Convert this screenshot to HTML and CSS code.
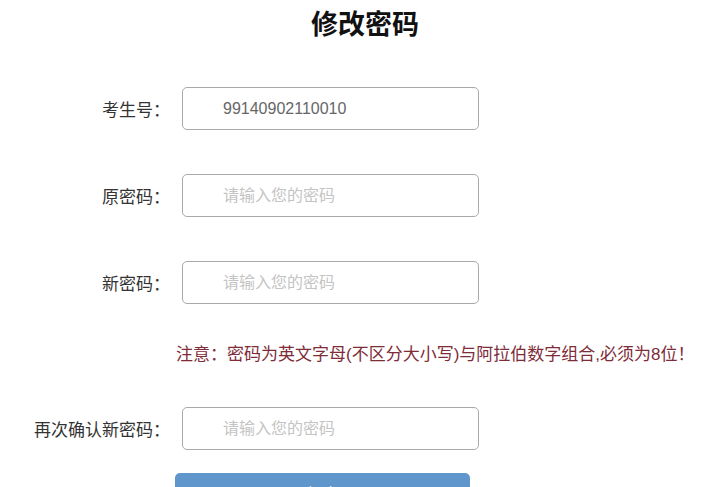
FILE: index.html
```html
<!DOCTYPE html>
<html lang="zh-CN">

<head>
    <meta charset="UTF-8">
    <meta name="viewport" content="width=device-width, initial-scale=1.0">
    <title>修改密码</title>
    <link rel="stylesheet" href="styles.css">
</head>

<body>
    <h1 class="title">修改密码</h1>

    <form class="pwd-form" action="" onsubmit="return false">
        <div class="field">
            <label for="sid">考生号：</label>
            <input type="text" id="sid" value="99140902110010">
        </div>

        <div class="field">
            <label for="old">原密码：</label>
            <input type="password" id="old" placeholder="请输入您的密码">
        </div>

        <div class="field">
            <label for="new">新密码：</label>
            <input type="password" id="new" placeholder="请输入您的密码">
        </div>

        <p class="note">注意：密码为英文字母(不区分大小写)与阿拉伯数字组合,必须为8位！</p>

        <div class="field">
            <label for="again">再次确认新密码：</label>
            <input type="password" id="again" placeholder="请输入您的密码">
        </div>

        <button type="submit" class="submit">提交</button>
    </form>
</body>

</html>
```

FILE: styles.css
```css
body {
    margin: 0;
    background-color: #fff;
    font-family: "Liberation Sans", "Noto Sans CJK SC", sans-serif;
    color: #333;
}

.title {
    margin: 0;
    padding: 8px 0 0 10px;
    font-size: 27px;
    line-height: 34px;
    font-weight: bold;
    text-align: center;
    color: #111;
}

.pwd-form {
    display: flex;
    flex-direction: column;
    margin-top: 45px;
}

.field {
    display: flex;
    align-items: center;
    height: 43px;
    margin-bottom: 44px;
}

.field label {
    width: 170px;
    text-align: right;
    font-size: 17px;
    color: #333;
}

.field input {
    box-sizing: border-box;
    width: 297px;
    height: 43px;
    margin-left: 12px;
    padding: 0 0 0 40px;
    border: 1px solid #aaa;
    border-radius: 5px;
    font-family: "Liberation Sans", "Noto Sans CJK SC", sans-serif;
    font-size: 16px;
    color: #666;
    outline: none;
}

.field input::placeholder {
    color: #c4c4c4;
}

.note {
    margin: -4px 0 41px 176px;
    font-size: 17px;
    line-height: 22px;
    color: #7e2c38;
}

.field:last-of-type {
    margin-bottom: 23px;
}

.submit {
    width: 295px;
    height: 40px;
    margin-left: 175px;
    border: none;
    border-radius: 5px;
    background-color: #5f96cb;
    color: #fff;
    font-size: 16px;
    cursor: pointer;
}
```
